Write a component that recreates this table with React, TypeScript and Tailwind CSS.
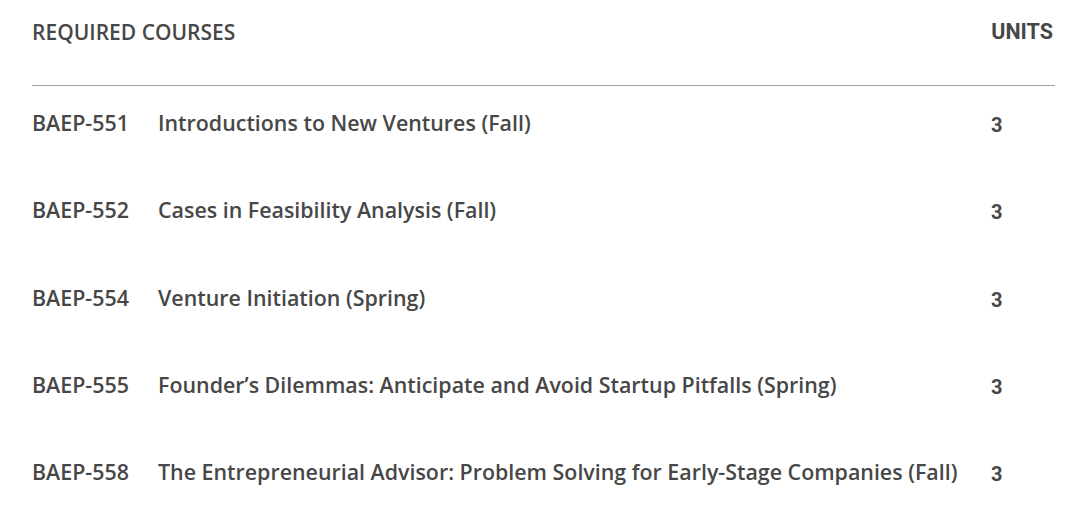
const courses = [
  { code: "BAEP-551", title: "Introductions to New Ventures (Fall)", units: 3 },
  { code: "BAEP-552", title: "Cases in Feasibility Analysis (Fall)", units: 3 },
  { code: "BAEP-554", title: "Venture Initiation (Spring)", units: 3 },
  { code: "BAEP-555", title: "Founder’s Dilemmas: Anticipate and Avoid Startup Pitfalls (Spring)", units: 3 },
  { code: "BAEP-558", title: "The Entrepreneurial Advisor: Problem Solving for Early-Stage Companies (Fall)", units: 3 },
];

export default function App() {
  return (
    <div className="w-[1080px] h-[505px] bg-white pl-8 pr-[25px] text-[#474747] font-['Open_Sans',sans-serif]">
      <div className="flex items-center justify-between pt-[18px] pb-[39px] border-b border-[#a0a0a0]">
        <h2 className="text-[21px] font-semibold leading-[28px]">REQUIRED COURSES</h2>
        <span className="text-[21.5px] font-bold leading-[28px] font-['Roboto',sans-serif] mr-[2px]">UNITS</span>
      </div>
      <ul className="pt-[23px]">
        {courses.map((c) => (
          <li key={c.code} className="flex items-center h-[28px] mb-[59.25px] text-[21.4px] font-semibold leading-[28px]">
            <span className="w-[126px]">{c.code}</span>
            <span className="flex-1">{c.title}</span>
            <span className="w-[64px] pt-[4px] text-[20px] font-bold font-['Roboto',sans-serif]">{c.units}</span>
          </li>
        ))}
      </ul>
    </div>
  );
}
